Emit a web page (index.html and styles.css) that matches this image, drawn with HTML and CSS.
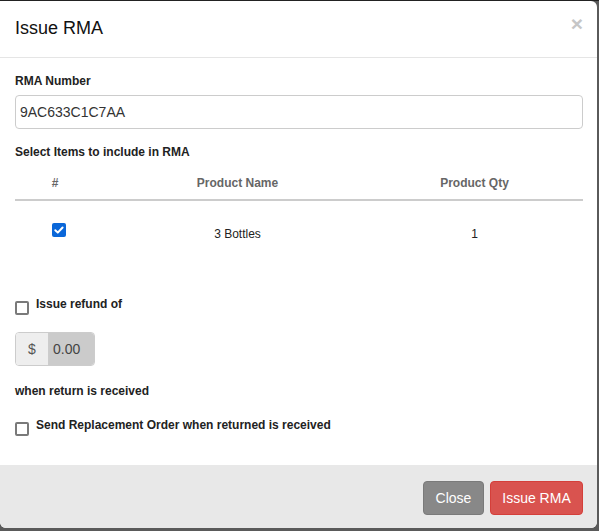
FILE: index.html
```html
<!DOCTYPE html>
<html>
<head>
<meta charset="utf-8">
<link rel="stylesheet" href="styles.css">
</head>
<body>
<div class="modal">
  <div class="modal-header">
    <h4 class="title">Issue RMA</h4>
    <span class="close">&times;</span>
  </div>
  <div class="modal-body">
    <label class="lbl">RMA Number</label>
    <div class="text-input">9AC633C1C7AA</div>
    <div class="lbl sel">Select Items to include in RMA</div>
    <div class="table">
      <div class="thead">
        <div class="c1">#</div>
        <div class="c2">Product Name</div>
        <div class="c3">Product Qty</div>
      </div>
      <div class="trow">
        <div class="c1"><span class="cb checked"><svg viewBox="0 0 14 14" width="14" height="14"><path d="M3.3 7.2 L5.8 9.6 L10.6 4.5" fill="none" stroke="#fff" stroke-width="2" stroke-linecap="round" stroke-linejoin="round"/></svg></span></div>
        <div class="c2">3 Bottles</div>
        <div class="c3">1</div>
      </div>
    </div>
    <div class="check-line refund"><span class="cb"></span><span class="lbl">Issue refund of</span></div>
    <div class="input-group">
      <span class="addon">$</span>
      <span class="amount">0.00</span>
    </div>
    <div class="lbl when">when return is received</div>
    <div class="check-line repl"><span class="cb"></span><span class="lbl">Send Replacement Order when returned is received</span></div>
  </div>
  <div class="modal-footer">
    <button class="btn btn-close">Close</button>
    <button class="btn btn-danger">Issue RMA</button>
  </div>
</div>
</body>
</html>
```

FILE: styles.css
```css
html, body {
  margin: 0;
  padding: 0;
}
body {
  background: #5a5a5a;
  font-family: "Liberation Sans", Arial, sans-serif;
  color: #222;
  width: 599px;
  height: 531px;
  overflow: hidden;
  border-top: 1px solid #222;
  box-sizing: border-box;
}
.modal {
  width: 597px;
  height: 527px;
  background: #fff;
  border-radius: 0 6px 6px 6px;
  overflow: hidden;
  display: flex;
  flex-direction: column;
}
.modal-header {
  height: 56px;
  border-bottom: 1px solid #e5e5e5;
  display: flex;
  align-items: center;
  justify-content: space-between;
  padding: 0 15px;
}
.title {
  margin: 0;
  font-size: 18px;
  font-weight: normal;
  color: #111;
  padding-bottom: 1px;
}
.close {
  font-size: 21px;
  font-weight: bold;
  color: #c6c6c6;
  line-height: 1;
  margin-top: -12px;
  margin-right: -1px;
}
.modal-body {
  flex: 1;
  padding: 16px 14px 0 15px;
}
.lbl {
  display: block;
  font-size: 12px;
  font-weight: bold;
  line-height: 14px;
  color: #222;
}
.text-input {
  margin-top: 7px;
  height: 34px;
  box-sizing: border-box;
  border: 1px solid #ccc;
  border-radius: 4px;
  padding: 0 4px;
  font-size: 14px;
  line-height: 32px;
  color: #333;
}
.sel {
  margin-top: 16px;
}
.table {
  margin-top: 8px;
}
.thead, .trow {
  display: grid;
  grid-template-columns: 80px 285px 1fr;
  text-align: center;
  font-size: 12px;
}
.thead {
  height: 32px;
  line-height: 32px;
  border-bottom: 2px solid #cccccc;
  font-weight: bold;
  color: #666;
}
.thead .c3, .trow .c3 {
  padding-right: 14px;
}
.trow {
  height: 66px;
  padding-top: 21px;
  box-sizing: border-box;
  color: #222;
  line-height: 24px;
}
.trow .c1 {
  display: flex;
  justify-content: center;
  padding-top: 1px;
}
.cb {
  display: inline-block;
  flex: none;
  width: 14px;
  height: 14px;
  box-sizing: border-box;
  border: 2px solid #7a7a7a;
  border-radius: 2px;
  background: #fff;
}
.cb.checked {
  border: none;
  background: #0a67d9;
  margin-left: 8px;
}
.cb svg {
  display: block;
}
.check-line {
  display: flex;
  align-items: flex-start;
  gap: 7px;
}
.check-line .cb {
  margin-top: 4px;
}
.refund {
  margin-top: 30px;
}
.input-group {
  margin-top: 17px;
  display: flex;
  width: 80px;
  height: 34px;
  box-sizing: border-box;
  border: 1px solid #ccc;
  border-radius: 4px;
  overflow: hidden;
  font-size: 14px;
  color: #555;
}
.addon {
  width: 32px;
  background: #eee;
  border-right: 1px solid #ccc;
  text-align: center;
  line-height: 32px;
}
.amount {
  flex: 1;
  background: #cbcbcb;
  line-height: 32px;
  padding-left: 4px;
  color: #444;
}
.when {
  margin-top: 18px;
}
.repl {
  margin-top: 20px;
}
.modal-footer {
  height: 63px;
  background: #e8e8e8;
  display: flex;
  justify-content: flex-end;
  align-items: flex-start;
  padding: 16px 14px 0 0;
  box-sizing: border-box;
  gap: 6px;
}
.btn {
  font-family: "Liberation Sans", Arial, sans-serif;
  font-size: 14px;
  color: #fff;
  height: 34px;
  border-radius: 4px;
  padding: 0;
  white-space: nowrap;
  cursor: pointer;
}
.btn-close {
  width: 61px;
  background: #888;
  border: 1px solid #7a7a7a;
}
.btn-danger {
  width: 93px;
  background: #d9534f;
  border: 1px solid #d43f3a;
}
```
